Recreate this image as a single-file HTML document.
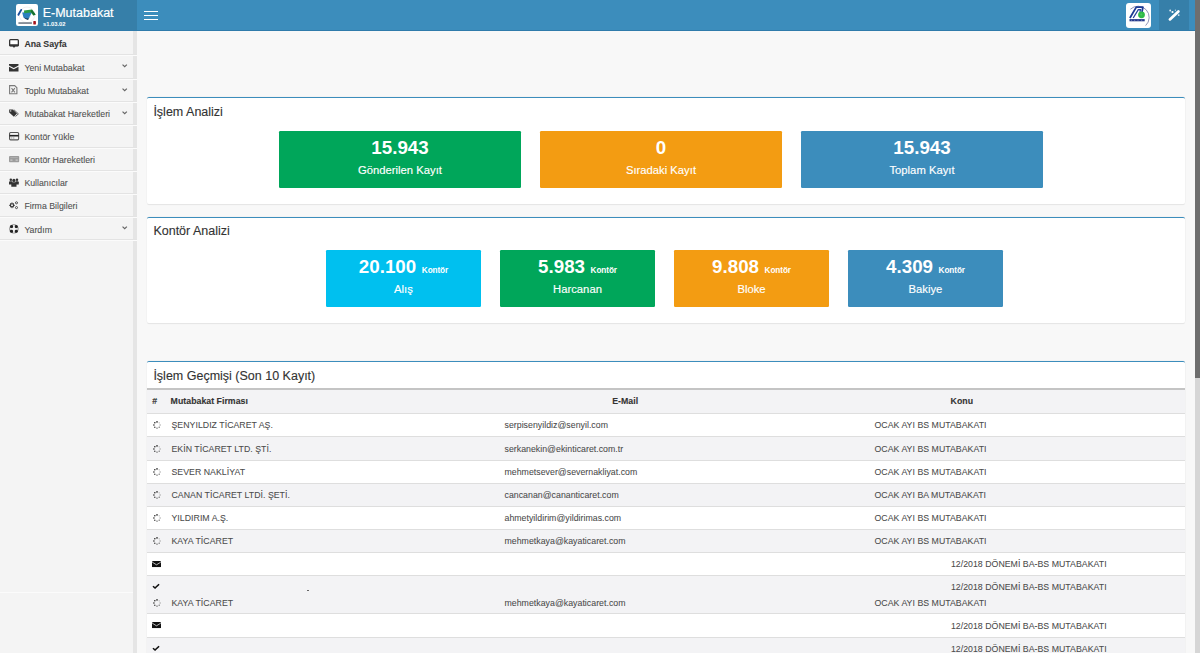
<!DOCTYPE html>
<html><head><meta charset="utf-8">
<style>
*{margin:0;padding:0;box-sizing:border-box}
html,body{width:1200px;height:653px;overflow:hidden;background:#f8f8f8;font-family:"Liberation Sans",sans-serif;}
.a{position:absolute;white-space:nowrap}
.t{position:absolute;white-space:nowrap;line-height:1}
#hdr{position:absolute;left:0;top:0;width:1195px;height:31px;background:#3c8dbc;border-bottom:1.1px solid #2f7bab}
#logo{position:absolute;left:0;top:0;width:137.3px;height:29.9px;background:#367fa9}
#side{position:absolute;left:0;top:31.25px;width:137px;height:622px;background:#f4f4f4}
#strip{position:absolute;left:132.5px;top:31.25px;width:4.5px;height:622px;background:#e5e5e5}
.sep{position:absolute;left:0;width:137px;height:2px;border-top:1px solid #e3e3e3;border-bottom:1px solid #fbfbfb}
.mt{position:absolute;left:24.4px;font-size:8.75px;color:#505050;line-height:1;-webkit-text-stroke:0.08px #505050}
.chev{position:absolute;left:121.5px;width:5px;height:5px}
.box{position:absolute;left:146.8px;width:1038px;background:#fff;border-top:1.875px solid #3c8dbc;border-radius:2px;box-shadow:0 0 0 0.3px #ececec,0 0.8px 1px rgba(0,0,0,0.09)}
.bt{position:absolute;left:6.6px;font-size:12.5px;color:#333;line-height:1;-webkit-text-stroke:0.12px #333}
.sb{position:absolute;border-radius:1.2px;color:#fff;text-align:center}
.sn{position:absolute;left:0;right:0;font-size:18.75px;font-weight:bold;line-height:1}
.sl{position:absolute;left:0;right:0;font-size:11.25px;line-height:1;-webkit-text-stroke:0.15px #fff}
.sk{font-size:8.2px;font-weight:bold;margin-left:5.6px;vertical-align:0;letter-spacing:-0.08px}
#scroll{position:absolute;left:1195px;top:0;width:5px;height:653px;background:#d6d6d6}
#thumb{position:absolute;left:1195px;top:0;width:5px;height:378px;background:#6e6e6e}
.row{position:absolute;left:147px;width:1037.8px;height:23.125px;border-top:1.2px solid #dedede}
.td{position:absolute;font-size:8.75px;color:#4a4a4a;line-height:1;white-space:nowrap;-webkit-text-stroke:0.06px #4a4a4a;letter-spacing:0.03px}
.ic{position:absolute;overflow:visible}
.th{font-weight:bold;color:#333;-webkit-text-stroke:0.1px #333}
</style></head>
<body>
<svg width="0" height="0" style="position:absolute">
<defs>
<symbol id="spin" viewBox="0 0 8 8"><circle cx="4.00" cy="0.90" r="0.8" fill="#2a2a2a"/><circle cx="6.19" cy="1.81" r="0.65" fill="#aaa"/><circle cx="7.10" cy="4.00" r="0.65" fill="#999"/><circle cx="6.19" cy="6.19" r="0.65" fill="#555"/><circle cx="4.00" cy="7.10" r="0.7" fill="#3a3a3a"/><circle cx="1.81" cy="6.19" r="0.72" fill="#333"/><circle cx="0.90" cy="4.00" r="0.78" fill="#2a2a2a"/><circle cx="1.81" cy="1.81" r="0.8" fill="#2a2a2a"/></symbol>
<symbol id="mail" viewBox="0 0 9 7"><rect width="9" height="7" rx="0.5" fill="#111"/><path d="M0.2 1.3 L4.5 4.3 L8.8 1.3" fill="none" stroke="#fff" stroke-width="0.75"/></symbol>
<symbol id="check" viewBox="0 0 8 7"><path fill="none" stroke="#111" stroke-width="1.6" d="M1 3.5L3.1 5.5 7.2 1.3"/></symbol>
</defs></svg>
<!-- header -->
<div id="hdr"></div>
<div id="logo"></div>
<div class="a" style="left:15.7px;top:4.1px;width:22px;height:22px;background:#fff;border-radius:2.2px"></div>
<svg class="ic" style="left:15.7px;top:4.1px" width="22" height="22" viewBox="0 0 22 22">
<circle cx="11" cy="10.8" r="7.8" fill="none" stroke="#e6e6e6" stroke-width="0.6"/>
<path d="M2.4 10.8 L5.2 5.9" stroke="#1d4f9a" stroke-width="1.9" stroke-linecap="round"/>
<path d="M6.2 8.4 L16.4 7.8 L12 15.6 Q9.2 15.2 7.4 13.2z" fill="#2b7fbf"/>
<path d="M7.2 13 Q9.4 15.6 12 15.9 L14.8 11.4 L12.6 14.6 Q9.6 14.6 7.2 13z" fill="#1b3550"/>
<path d="M8 6.6 L15.9 5.6 L19.6 10.6 L17.3 11.4 L15 8.4 L8.2 9.2z" fill="#2a9a45"/>
<path d="M15.9 5.6 L19.6 10.6 L17.6 11.4 L14.8 7.4z" fill="#17702f"/>
<rect x="2.4" y="18.3" width="13.5" height="1.5" fill="#505a68" opacity="0.85"/>
<rect x="17.3" y="16.9" width="2.6" height="3.7" rx="0.7" fill="#a5141c"/>
</svg>
<div class="t" style="left:42.7px;top:7px;font-size:12.5px;color:#fff;-webkit-text-stroke:0.2px #fff">E-Mutabakat</div>
<div class="t" style="left:43px;top:21.5px;font-size:5.8px;font-weight:bold;color:#fff">s1.03.02</div>
<div class="a" style="left:144px;top:11.1px;width:14px;height:1.3px;background:#fff"></div>
<div class="a" style="left:144px;top:14.8px;width:14px;height:1.3px;background:#fff"></div>
<div class="a" style="left:144px;top:18.6px;width:14px;height:1.3px;background:#fff"></div>
<div class="a" style="left:1126px;top:3px;width:25.3px;height:25px;background:#fff;border-radius:3px"></div>
<svg class="ic" style="left:1126px;top:3px" width="25.3" height="25" viewBox="0 0 25.3 25">
<path d="M4.4 6.2 A11 11 0 1 1 19.6 22.6" fill="none" stroke="#7479a4" stroke-width="0.8"/>
<path d="M3.9 15 L10.3 4.1 L16.9 4.1 L16 8.8" fill="none" stroke="#1b3a94" stroke-width="1.8" stroke-linejoin="round"/>
<path d="M7.2 15 L12.3 6.6 L14.4 6.6 L14 8.8" fill="none" stroke="#23429c" stroke-width="1.3"/>
<circle cx="15.5" cy="11.8" r="3.4" fill="#2fbb48"/>
<circle cx="15.3" cy="11.6" r="1" fill="#5fcf74" opacity="0.6"/>
<rect x="3.5" y="16.1" width="15.2" height="2.2" fill="#25398c"/>
<g fill="#9aa6d0"><rect x="5" y="16.9" width="1" height="0.6"/><rect x="8" y="16.9" width="1.2" height="0.6"/><rect x="11.5" y="16.9" width="1" height="0.6"/><rect x="15" y="16.9" width="1.2" height="0.6"/></g>
</svg>
<div class="a" style="left:1159.2px;top:0;width:30px;height:29.9px;background:#367fa9"></div>
<svg class="ic" style="left:1166px;top:8px" width="16" height="14" viewBox="0 0 16 14">
<path d="M3.9 11.4 L12.4 3.4" stroke="#fff" stroke-width="2.7" stroke-linecap="round"/>
<circle cx="4.2" cy="2.5" r="0.9" fill="#e8f0f7"/><circle cx="6.5" cy="4" r="1.1" fill="#fff"/><circle cx="12.7" cy="7.1" r="0.9" fill="#dfe9f3"/><circle cx="9.4" cy="2.2" r="0.6" fill="#cfe0ee"/>
</svg>

<!-- sidebar -->
<div id="side"></div>
<div id="strip"></div>
<div class="a" style="left:0;top:592.3px;width:132.5px;height:1px;background:#fbfbfb"></div>
<div class="sep" style="top:54.400px"></div>
<div class="sep" style="top:77.500px"></div>
<div class="sep" style="top:100.600px"></div>
<div class="sep" style="top:123.700px"></div>
<div class="sep" style="top:146.800px"></div>
<div class="sep" style="top:169.900px"></div>
<div class="sep" style="top:193.000px"></div>
<div class="sep" style="top:216.100px"></div>
<div class="sep" style="top:239.200px"></div>
<div class="mt" style="top:39.75px;font-weight:bold;color:#333">Ana Sayfa</div>
<div class="mt" style="top:63.60px">Yeni Mutabakat</div>
<div class="mt" style="top:86.70px">Toplu Mutabakat</div>
<div class="mt" style="top:109.90px">Mutabakat Hareketleri</div>
<div class="mt" style="top:133.00px">Kontör Yükle</div>
<div class="mt" style="top:156.10px">Kontör Hareketleri</div>
<div class="mt" style="top:179.20px">Kullanıcılar</div>
<div class="mt" style="top:202.40px">Firma Bilgileri</div>
<div class="mt" style="top:225.50px">Yardım</div>

<!-- sidebar icons -->
<svg class="ic" style="left:9px;top:39px" width="10" height="9" viewBox="0 0 10 9"><rect x="0.65" y="0.65" width="8.7" height="6.1" rx="0.9" fill="#fff" stroke="#333" stroke-width="1.3"/><rect x="0.2" y="5.3" width="9.6" height="1.9" rx="0.6" fill="#333"/><path d="M3.6 7 H6.4 L5.6 8.6 H4.4z" fill="#333"/></svg>
<svg class="ic" style="left:9px;top:64.2px" width="9.5" height="7.4" viewBox="0 0 9.5 7.4"><path fill="#333" d="M0 0h9.5v1.5L4.75 4.1 0 1.5z M0 2.7l4.75 2.6 4.75-2.6V7.4H0z"/></svg>
<svg class="ic" style="left:9px;top:85.2px" width="8.5" height="9.4" viewBox="0 0 8.5 9.4"><path d="M0.6 0.6h5.1l2.2 2.2v6H0.6z" fill="none" stroke="#7a7a7a" stroke-width="1.1"/><path d="M2.5 3.2l3.4 4.2 M5.9 3.2l-3.4 4.2" stroke="#7a7a7a" stroke-width="1.1"/></svg>
<svg class="ic" style="left:9px;top:108.5px" width="10.2" height="7.8" viewBox="0 0 10.2 7.8"><path fill="#333" d="M0.2 0.4h3.6l4.2 4.2-3.1 3.1L0.2 3.4z"/><circle cx="1.7" cy="1.9" r="0.7" fill="#f4f4f4"/><path fill="none" stroke="#555" stroke-width="0.9" d="M4.8 0.6l4.6 4.3-2.9 2.6"/></svg>
<svg class="ic" style="left:9px;top:132px" width="10.2" height="8.4" viewBox="0 0 10.2 8.4"><rect x="0.55" y="0.55" width="9.1" height="7.3" rx="1" fill="#f4f4f4" stroke="#555" stroke-width="1.1"/><rect x="0.5" y="2.9" width="9.2" height="1.6" fill="#222"/><rect x="1.8" y="5.6" width="1.6" height="0.8" fill="#888"/><rect x="4" y="5.6" width="1.4" height="0.8" fill="#888"/></svg>
<svg class="ic" style="left:9px;top:156px" width="10.2" height="6.2" viewBox="0 0 10.2 6.2"><rect x="0" y="0" width="10.2" height="6.2" rx="0.9" fill="#9c9c9c"/><rect x="1.3" y="3.6" width="2.2" height="1" fill="#d8d8d8"/><rect x="6.6" y="3.6" width="2.2" height="1" fill="#d8d8d8"/><rect x="1.3" y="1.2" width="7.5" height="0.9" fill="#b4b4b4"/></svg>
<svg class="ic" style="left:9px;top:177.9px" width="9.8" height="8.8" viewBox="0 0 9.8 8.8"><g fill="#333"><circle cx="1.8" cy="1.7" r="1.25"/><circle cx="8" cy="1.7" r="1.25"/><path d="M0 4.3 q0-1.1 1.1-1.1h1.4 q1 0 1 1.1V6.5H0z"/><path d="M9.8 4.3 q0-1.1-1.1-1.1H7.3 q-1 0-1 1.1V6.5h3.5z"/><circle cx="4.9" cy="2.4" r="1.6"/><path d="M2.3 6 q0-1.8 1.6-1.8h2 q1.6 0 1.6 1.8V8.8H2.3z"/></g></svg>
<svg class="ic" style="left:9px;top:201px" width="9.2" height="8.4" viewBox="0 0 9.2 8.4"><g stroke="#333" stroke-width="0.9"><path d="M3 1.4V7.2 M0.1 4.3H5.9 M1 2.3L5 6.3 M5 2.3L1 6.3"/></g><circle cx="3" cy="4.3" r="2.1" fill="#333"/><circle cx="3" cy="4.3" r="1" fill="#f4f4f4"/><g fill="none" stroke="#444" stroke-width="0.95"><circle cx="7.5" cy="1.8" r="1.05"/><circle cx="7.5" cy="6.6" r="1.05"/></g></svg>
<svg class="ic" style="left:8.9px;top:224px" width="9.8" height="9.8" viewBox="-4.9 -4.9 9.8 9.8"><circle r="4.7" fill="#8a8a8a"/><g fill="#222"><circle cx="-2.3" cy="-2.3" r="1.6"/><circle cx="2.3" cy="-2.3" r="1.6"/><circle cx="-2.3" cy="2.3" r="1.6"/><circle cx="2.3" cy="2.3" r="1.6"/></g><g fill="#f6f6f6"><rect x="-0.75" y="-3.9" width="1.5" height="7.8"/><rect x="-3.9" y="-0.75" width="7.8" height="1.5"/><circle r="1.7"/></g></svg>
<!-- chevrons -->
<svg class="ic" style="left:121.5px;top:64.40px" width="5.4" height="3.6" viewBox="0 0 5 3.2"><path d="M0.5 0.5L2.5 2.5 4.5 0.5" fill="none" stroke="#666" stroke-width="1.1"/></svg>
<svg class="ic" style="left:121.5px;top:87.50px" width="5.4" height="3.6" viewBox="0 0 5 3.2"><path d="M0.5 0.5L2.5 2.5 4.5 0.5" fill="none" stroke="#666" stroke-width="1.1"/></svg>
<svg class="ic" style="left:121.5px;top:110.60px" width="5.4" height="3.6" viewBox="0 0 5 3.2"><path d="M0.5 0.5L2.5 2.5 4.5 0.5" fill="none" stroke="#666" stroke-width="1.1"/></svg>
<svg class="ic" style="left:121.5px;top:226.20px" width="5.4" height="3.6" viewBox="0 0 5 3.2"><path d="M0.5 0.5L2.5 2.5 4.5 0.5" fill="none" stroke="#666" stroke-width="1.1"/></svg>

<!-- content -->
<div class="box" style="top:96.9px;height:107px">
  <div class="bt" style="top:8px">İşlem Analizi</div>
</div>
<div class="sb" style="left:279px;top:130.5px;width:242px;height:57.3px;background:#00a65a">
  <div class="sn" style="top:8.3px">15.943</div><div class="sl" style="top:34px">Gönderilen Kayıt</div></div>
<div class="sb" style="left:540px;top:130.5px;width:242px;height:57.3px;background:#f39c12">
  <div class="sn" style="top:8.3px">0</div><div class="sl" style="top:34px">Sıradaki Kayıt</div></div>
<div class="sb" style="left:801px;top:130.5px;width:242px;height:57.3px;background:#3c8dbc">
  <div class="sn" style="top:8.3px">15.943</div><div class="sl" style="top:34px">Toplam Kayıt</div></div>

<div class="box" style="top:216.8px;height:106.5px">
  <div class="bt" style="top:7.5px">Kontör Analizi</div>
</div>
<div class="sb" style="left:326px;top:250.2px;width:155px;height:57.2px;background:#00c0ef">
  <div class="sn" style="top:8.1px">20.100<span class="sk">Kontör</span></div><div class="sl" style="top:34px">Alış</div></div>
<div class="sb" style="left:500px;top:250.2px;width:155px;height:57.2px;background:#00a65a">
  <div class="sn" style="top:8.1px">5.983<span class="sk">Kontör</span></div><div class="sl" style="top:34px">Harcanan</div></div>
<div class="sb" style="left:674px;top:250.2px;width:155px;height:57.2px;background:#f39c12">
  <div class="sn" style="top:8.1px">9.808<span class="sk">Kontör</span></div><div class="sl" style="top:34px">Bloke</div></div>
<div class="sb" style="left:848px;top:250.2px;width:155px;height:57.2px;background:#3c8dbc">
  <div class="sn" style="top:8.1px">4.309<span class="sk">Kontör</span></div><div class="sl" style="top:34px">Bakiye</div></div>

<div class="box" style="top:361px;height:300px">
  <div class="bt" style="top:8px">İşlem Geçmişi (Son 10 Kayıt)</div>
</div>


<!-- table -->
<div class="a" style="left:147px;top:388.4px;width:1037.8px;height:1.9px;background:#c4c4c4"></div>
<div class="a" style="left:147px;top:390.3px;width:1037.8px;height:23px;background:#f3f3f5"></div>
<div class="td th" style="left:152.3px;top:397.3px">#</div>
<div class="td th" style="left:170.6px;top:397.3px">Mutabakat Firması</div>
<div class="td th" style="left:612.2px;top:397.3px">E-Mail</div>
<div class="td th" style="left:950.6px;top:397.3px">Konu</div>
<div class="row" style="top:413.30px;height:23.32px;background:#fff"></div>
<div class="row" style="top:436.43px;height:23.32px;background:#f3f3f5"></div>
<div class="row" style="top:459.55px;height:23.32px;background:#fff"></div>
<div class="row" style="top:482.68px;height:23.32px;background:#f3f3f5"></div>
<div class="row" style="top:505.80px;height:23.32px;background:#fff"></div>
<div class="row" style="top:528.92px;height:23.32px;background:#f3f3f5"></div>
<div class="row" style="top:552.05px;height:23.32px;background:#fff"></div>
<div class="row" style="top:575.17px;height:38.43px;background:#f3f3f5"></div>
<div class="row" style="top:613.40px;height:23.60px;background:#fff"></div>
<div class="row" style="top:636.80px;height:30.20px;background:#f3f3f5"></div>
<svg class="ic" style="left:153px;top:421.40px" width="8" height="8"><use href="#spin"/></svg>
<div class="td" style="left:171.5px;top:421.39px">ŞENYILDIZ TİCARET AŞ.</div>
<div class="td" style="left:504.5px;top:421.39px">serpisenyildiz@senyil.com</div>
<div class="td" style="left:874.5px;top:421.39px">OCAK AYI BS MUTABAKATI</div>
<svg class="ic" style="left:153px;top:444.53px" width="8" height="8"><use href="#spin"/></svg>
<div class="td" style="left:171.5px;top:444.51px">EKİN TİCARET LTD. ŞTİ.</div>
<div class="td" style="left:504.5px;top:444.51px">serkanekin@ekinticaret.com.tr</div>
<div class="td" style="left:874.5px;top:444.51px">OCAK AYI BS MUTABAKATI</div>
<svg class="ic" style="left:153px;top:467.65px" width="8" height="8"><use href="#spin"/></svg>
<div class="td" style="left:171.5px;top:467.64px">SEVER NAKLİYAT</div>
<div class="td" style="left:504.5px;top:467.64px">mehmetsever@severnakliyat.com</div>
<div class="td" style="left:874.5px;top:467.64px">OCAK AYI BS MUTABAKATI</div>
<svg class="ic" style="left:153px;top:490.78px" width="8" height="8"><use href="#spin"/></svg>
<div class="td" style="left:171.5px;top:490.76px">CANAN TİCARET LTDİ. ŞETİ.</div>
<div class="td" style="left:504.5px;top:490.76px">cancanan@cananticaret.com</div>
<div class="td" style="left:874.5px;top:490.76px">OCAK AYI BA MUTABAKATI</div>
<svg class="ic" style="left:153px;top:513.90px" width="8" height="8"><use href="#spin"/></svg>
<div class="td" style="left:171.5px;top:513.89px">YILDIRIM A.Ş.</div>
<div class="td" style="left:504.5px;top:513.89px">ahmetyildirim@yildirimas.com</div>
<div class="td" style="left:874.5px;top:513.89px">OCAK AYI BS MUTABAKATI</div>
<svg class="ic" style="left:153px;top:537.02px" width="8" height="8"><use href="#spin"/></svg>
<div class="td" style="left:171.5px;top:537.01px">KAYA TİCARET</div>
<div class="td" style="left:504.5px;top:537.01px">mehmetkaya@kayaticaret.com</div>
<div class="td" style="left:874.5px;top:537.01px">OCAK AYI BS MUTABAKATI</div>
<svg class="ic" style="left:152px;top:560.95px" width="9" height="6.2" viewBox="0 0 9 7" preserveAspectRatio="none"><use href="#mail"/></svg>
<div class="td" style="left:950.9px;top:560.24px">12/2018 DÖNEMİ BA-BS MUTABAKATI</div>
<svg class="ic" style="left:152.3px;top:583.47px" width="7.9" height="6.3" viewBox="0 0 8 7" preserveAspectRatio="none"><use href="#check"/></svg>
<div class="td" style="left:950.9px;top:582.97px">12/2018 DÖNEMİ BA-BS MUTABAKATI</div>
<svg class="ic" style="left:153px;top:599.07px" width="8" height="8"><use href="#spin"/></svg>
<div class="td" style="left:171.5px;top:599.06px">KAYA TİCARET</div>
<div class="td" style="left:504.5px;top:599.06px">mehmetkaya@kayaticaret.com</div>
<div class="td" style="left:874.5px;top:599.06px">OCAK AYI BS MUTABAKATI</div>
<div class="a" style="left:307.3px;top:590.47px;width:1.3px;height:1px;background:#666"></div>
<svg class="ic" style="left:152px;top:622.30px" width="9" height="6.2" viewBox="0 0 9 7" preserveAspectRatio="none"><use href="#mail"/></svg>
<div class="td" style="left:950.9px;top:621.59px">12/2018 DÖNEMİ BA-BS MUTABAKATI</div>
<svg class="ic" style="left:152.3px;top:645.10px" width="7.9" height="6.3" viewBox="0 0 8 7" preserveAspectRatio="none"><use href="#check"/></svg>
<div class="td" style="left:950.9px;top:644.59px">12/2018 DÖNEMİ BA-BS MUTABAKATI</div>
<div id="scroll"></div>
<div id="thumb"></div>
</body></html>
